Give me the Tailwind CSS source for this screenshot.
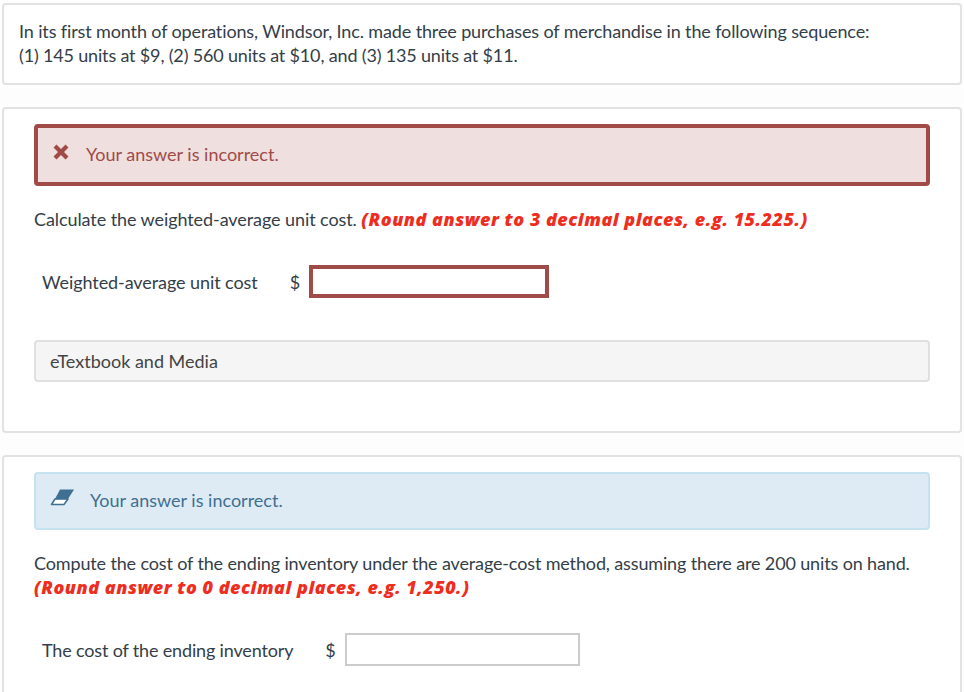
<!DOCTYPE html>
<html lang="en">

<head>
    <meta charset="UTF-8">
    <title>Weighted-average unit cost</title>
    <script src="https://cdn.jsdelivr.net/npm/@tailwindcss/browser@4"></script>
</head>

<body class="bg-[#fdfdfd] text-[#333e48] font-['Lato','Noto_Sans',sans-serif] text-[18px] overflow-hidden h-[692px]">
    <!-- Question text -->
    <section class="mt-[3px] ml-[2px] w-[960px] h-[82px] bg-white border-2 border-[#e2e2e2] rounded-[4px] px-[15px] pt-[14px] leading-[24px]">
        <p class="tracking-[-0.13px]">In its first month of operations, Windsor, Inc. made three purchases of merchandise in the following sequence:</p>
        <p class="tracking-[-0.17px]">(1) 145 units at $9, (2) 560 units at $10, and (3) 135 units at $11.</p>
    </section>

    <!-- Part 1 -->
    <section class="mt-[22px] ml-[2px] w-[960px] h-[326px] bg-white border-2 border-[#e2e2e2] rounded-[4px] px-[30px] pt-[15px]">
        <div class="h-[62px] bg-[#efdfdf] border-4 border-[#a04b48] rounded-[4px] flex items-center pl-[14px] pb-[2px] text-[#a04b48]">
            <svg class="w-[18px] h-[18px] mr-[16px] mb-[4px]" viewBox="0 0 18 18"><path d="M1.500 4.500 4.500 1.500 9 6 13.500 1.500 16.500 4.500 12 9 16.500 13.500 13.500 16.500 9 12 4.500 16.500 1.500 13.500 6 9Z" fill="#a04b48"/></svg>
            <span>Your answer is incorrect.</span>
        </div>
        <p class="mt-[21px] leading-[24px] tracking-[-0.08px]">Calculate the weighted-average unit cost. <b class="text-[#ee2d1e] italic font-extrabold font-['Open_Sans',sans-serif] text-[18px] tracking-[0.5px]">(Round answer to 3 decimal places, e.g. 15.225.)</b></p>
        <div class="mt-[34px] flex items-center pl-[8px] tracking-[-0.08px]">
            <span class="mt-[2px]">Weighted-average unit cost</span>
            <span class="ml-[32px] mt-[2px]">$</span>
            <div class="ml-[9px] w-[240px] h-[33px] border-4 border-[#a04b48] bg-white"></div>
        </div>
        <div class="mt-[42px] h-[42px] bg-[#f5f5f5] border-2 border-[#e0e0e0] rounded-[4px] flex items-center pl-[14px] text-[#444]">eTextbook and Media</div>
    </section>

    <!-- Part 2 -->
    <section class="mt-[22px] ml-[2px] w-[960px] h-[240px] bg-white border-2 border-b-0 border-[#e2e2e2] rounded-t-[4px] px-[30px] pt-[15px]">
        <div class="h-[58px] bg-[#deebf5] border-2 border-[#c4e3ef] rounded-[4px] flex items-center pl-[14px] pb-[2px] text-[#3f6f91]">
            <svg class="w-[24px] h-[17px] mr-[16px] mb-[6px]" viewBox="0 0 24 17"><path d="M10 .5H24L18 10H5Z" fill="#3f6f91"/><path d="M5 10H18L14 15.500H1.500Z" fill="#fff" stroke="#3f6f91" stroke-width="1.500" stroke-linejoin="round"/></svg>
            <span>Your answer is incorrect.</span>
        </div>
        <p class="mt-[21px] leading-[24px] tracking-[-0.14px]">Compute the cost of the ending inventory under the average-cost method, assuming there are 200 units on hand.<br><b class="text-[#ee2d1e] italic font-extrabold font-['Open_Sans',sans-serif] text-[18px] tracking-[0.5px]">(Round answer to 0 decimal places, e.g. 1,250.)</b></p>
        <div class="mt-[34px] flex items-center pl-[8px] tracking-[-0.16px]">
            <span class="mt-[2px]">The cost of the ending inventory</span>
            <span class="ml-[32px] mt-[2px]">$</span>
            <div class="ml-[9px] w-[235px] h-[33px] border-2 border-[#ccc] bg-white"></div>
        </div>
    </section>
</body>

</html>
